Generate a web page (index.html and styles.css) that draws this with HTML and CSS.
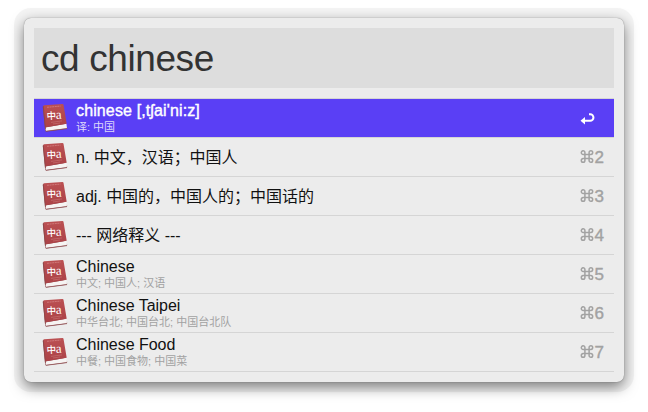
FILE: index.html
```html
<!DOCTYPE html>
<html lang="zh-CN">
<head>
<meta charset="utf-8">
<title>cd chinese</title>
<link rel="stylesheet" href="styles.css">
</head>
<body>
<svg class="defs" width="0" height="0" aria-hidden="true">
  <defs>
    <linearGradient id="cover" x1="0" y1="0" x2="0" y2="1">
      <stop offset="0" stop-color="#bb5052"/><stop offset="1" stop-color="#ab4247"/>
    </linearGradient>
    <symbol id="book" viewBox="0 0 26 30">
      <path d="M1.5 3 L0.8 4 L3.2 27.4 L4 28.5 L25 25.8 L25.2 24.6z" fill="#8b4a4e"/>
      <path d="M3.2 24.4 L24.4 20.8 L25 25.3 L4 28z" fill="#f6f4f3"/>
      <path d="M3.8 28.3 L25 25.6" stroke="#8e4a4e" stroke-width=".7"/>
      <path d="M1.3 3 Q1.4 2.4 2.2 2.3 L20.5 1 Q21.3 1 21.5 1.8 L24.7 20.8 L4 24.2 L3.2 25z" fill="url(#cover)"/>
      <path d="M1.3 3.3 L3.5 26" stroke="#8d4548" stroke-width=".8"/>
      <path d="M5 4.3 L18.5 3.1" stroke="#d9898a" stroke-width=".7" stroke-dasharray="2 .6"/>
      <path d="M9 19.4 L20 17.9 M11 21 L18 20" stroke="#ca7576" stroke-width=".6"/>
      <g class="cover-text"><text class="zh" x="4.6" y="16">中</text><text class="latin" x="13.8" y="16">a</text></g>
    </symbol>
    <symbol id="cmd" viewBox="0 0 13 13">
      <path d="M4.4 4.4H8.6V8.6H4.4z M4.4 4.4H2.8A1.8 1.8 0 1 1 4.4 2.6z M8.6 4.4V2.6A1.8 1.8 0 1 1 10.4 4.4z M8.6 8.6H10.4A1.8 1.8 0 1 1 8.6 10.4z M4.4 8.6V10.4A1.8 1.8 0 1 1 2.6 8.6z" fill="none" stroke="#a2a2a2" stroke-width="1.5"/>
    </symbol>
  </defs>
</svg>
<main class="window">
  <div class="search">cd chinese</div>
  <ul class="results">
    <li class="row selected"><svg class="book"><use href="#book"/></svg><div class="label"><div class="title">chinese [,tʃai'ni:z]</div><div class="sub">译: 中国</div></div>
      <svg class="enter" viewBox="0 0 15 12"><path d="M9 1.2H10.2A3 3 0 0 1 10.2 7.7H4" fill="none" stroke="#fff" stroke-width="2"/><path d="M0.5 7.7L5 4V11.4z" fill="#fff"/></svg></li>
    <li class="row"><svg class="book"><use href="#book"/></svg><div class="label"><div class="title">n. 中文，汉语；中国人</div></div><div class="key"><svg><use href="#cmd"/></svg>2</div></li>
    <li class="row"><svg class="book"><use href="#book"/></svg><div class="label"><div class="title">adj. 中国的，中国人的；中国话的</div></div><div class="key"><svg><use href="#cmd"/></svg>3</div></li>
    <li class="row"><svg class="book"><use href="#book"/></svg><div class="label"><div class="title">--- 网络释义 ---</div></div><div class="key"><svg><use href="#cmd"/></svg>4</div></li>
    <li class="row"><svg class="book"><use href="#book"/></svg><div class="label"><div class="title">Chinese</div><div class="sub">中文; 中国人; 汉语</div></div><div class="key"><svg><use href="#cmd"/></svg>5</div></li>
    <li class="row"><svg class="book"><use href="#book"/></svg><div class="label"><div class="title">Chinese Taipei</div><div class="sub">中华台北; 中国台北; 中国台北队</div></div><div class="key"><svg><use href="#cmd"/></svg>6</div></li>
    <li class="row"><svg class="book"><use href="#book"/></svg><div class="label"><div class="title">Chinese Food</div><div class="sub">中餐; 中国食物; 中国菜</div></div><div class="key"><svg><use href="#cmd"/></svg>7</div></li>
  </ul>
</main>
</body>
</html>
```
FILE: styles.css
```css
* { box-sizing: border-box; }
body {
  margin: 0;
  padding: 18px 24px;
  height: 412px;
  overflow: hidden;
  background: #fff;
  font-family: "Liberation Sans", "Noto Sans CJK SC", sans-serif;
}
.defs { position: absolute; }
.window {
  width: 600px;
  height: 364px;
  padding: 10px;
  border-radius: 7px;
  background: #ececec;
  box-shadow: 0 0 1px 0 rgba(0,0,0,.5), 0 0 0 10px rgba(0,0,0,.045), 0 5px 14px 0 rgba(0,0,0,.5);
}
.search {
  height: 60px;
  padding-left: 7px;
  background: #ddd;
  color: #333;
  font-size: 37px;
  line-height: 62px;
  letter-spacing: -.4px;
}
.results {
  margin: 10px 0 0;
  padding: 0;
  list-style: none;
  border-top: 1px solid #d5d5d5;
}
.row {
  display: flex;
  align-items: center;
  height: 39px;
  padding: 0 10px 0 8px;
  border-bottom: 1px solid #d5d5d5;
  color: #111;
}
.book { flex: none; width: 26px; height: 30px; margin-right: 8px; }
.cover-text { fill: #fff; transform: rotate(-3deg); transform-origin: 13px 13px; }
.zh { font: 500 9.5px "Noto Sans CJK SC", sans-serif; }
.latin { font: 13px "Liberation Serif", serif; }
.label { flex: 1; white-space: nowrap; }
.title { font-size: 16px; line-height: 17px; letter-spacing: -.02px; }
.sub { margin-top: 1px; color: #a2a2a2; font-size: 11px; line-height: 14px; }
.selected { background: #5a3ff5; background-clip: padding-box; color: #fff; }
.selected .title { letter-spacing: .13px; -webkit-text-stroke: .4px #fff; }
.selected .sub { color: #ddd8fb; }
.enter { width: 15px; height: 12px; margin: 2px 9px 0 0; }
.key {
  display: flex;
  align-items: center;
  gap: 1px;
  padding-top: 1px;
  color: #a2a2a2;
  font-size: 17px;
  line-height: 20px;
  -webkit-text-stroke: .4px #a2a2a2;
}
.key svg { width: 14px; height: 13px; margin-bottom: 2px; }
```
